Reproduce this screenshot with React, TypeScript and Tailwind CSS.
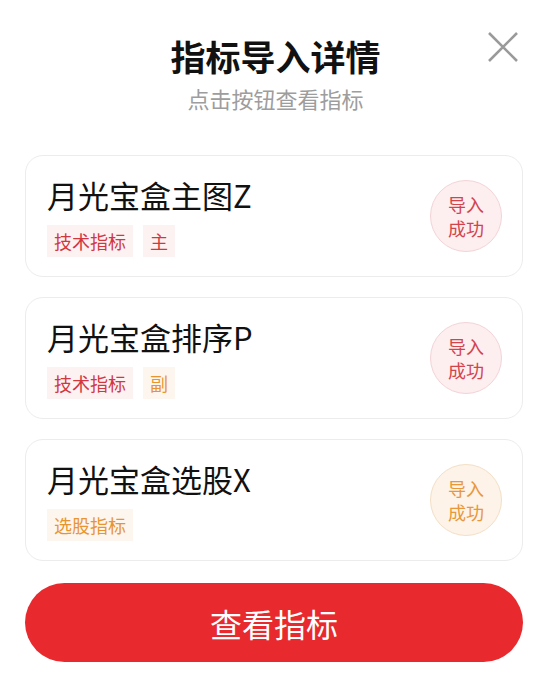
import React from 'react';

type Tag = { label: string; tone: 'red' | 'orange' };

interface Item {
  name: string;
  tags: Tag[];
  tone: 'red' | 'orange';
}

const items: Item[] = [
  { name: '月光宝盒主图Z', tags: [{ label: '技术指标', tone: 'red' }, { label: '主', tone: 'red' }], tone: 'red' },
  { name: '月光宝盒排序P', tags: [{ label: '技术指标', tone: 'red' }, { label: '副', tone: 'orange' }], tone: 'red' },
  { name: '月光宝盒选股X', tags: [{ label: '选股指标', tone: 'orange' }], tone: 'orange' },
];

const tagTone = {
  red: 'bg-[#fdf2f2] text-[#d2373f]',
  orange: 'bg-[#fdf6ee] text-[#e8952f]',
};

const stampTone = {
  red: 'bg-[#fdeef0] border-[#f3d3d7] text-[#d2444c]',
  orange: 'bg-[#fdf3e8] border-[#f3dfc6] text-[#e8973a]',
};

const IndicatorCard: React.FC<{ item: Item }> = ({ item }) => (
  <div className="flex h-[122px] items-center justify-between rounded-[18px] border border-[#ececec] bg-white pl-[21px] pr-[20px]">
    <div className="flex flex-col">
      <div className="text-[31px] leading-[40px] text-[#111]">{item.name}</div>
      <div className="mt-[10px] flex gap-[10px]">
        {item.tags.map((t) => (
          <span
            key={t.label}
            className={`flex h-[32px] items-center px-[7px] text-[18px] ${tagTone[t.tone]}`}
          >
            {t.label}
          </span>
        ))}
      </div>
    </div>
    <div
      className={`flex h-[72px] w-[72px] flex-col items-center justify-center rounded-full border text-[18px] leading-[24px] ${stampTone[item.tone]}`}
    >
      <span className="block h-[24px]">导入</span>
      <span className="block h-[24px]">成功</span>
    </div>
  </div>
);

export default function App() {
  return (
    <div
      className="relative h-[697px] w-[551px] overflow-hidden bg-white"
      style={{ fontFamily: '"Noto Sans CJK SC", "Noto Sans", sans-serif' }}
    >
      <button className="absolute right-[32px] top-[31px] text-[#9a9a9a]" aria-label="close">
        <svg width="32" height="32" viewBox="0 0 32 32" fill="none" stroke="currentColor" strokeWidth="2.6">
          <path d="M2 2 L30 30 M30 2 L2 30" />
        </svg>
      </button>

      <div className="flex flex-col items-center pt-[33px]">
        <h1 className="text-[35px] font-semibold leading-[46px] text-[#111]">指标导入详情</h1>
        <p className="mt-[4px] text-[22px] leading-[30px] text-[#9d9d9d]">点击按钮查看指标</p>
      </div>

      <div className="mt-[42px] flex flex-col gap-[20px] pl-[25px] pr-[28px]">
        {items.map((it) => (
          <IndicatorCard key={it.name} item={it} />
        ))}
      </div>

      <div className="mt-[22px] pl-[25px] pr-[28px]">
        <button className="flex h-[79px] w-full items-center justify-center rounded-full bg-[#e8292e] text-[32px] text-white">
          查看指标
        </button>
      </div>
    </div>
  );
}
